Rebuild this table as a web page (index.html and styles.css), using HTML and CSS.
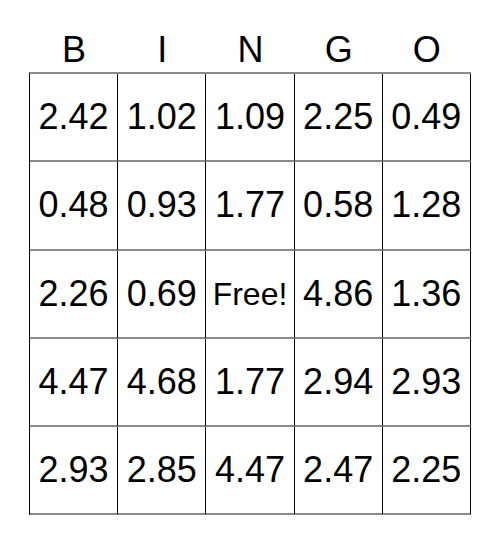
FILE: index.html
```html
<!DOCTYPE html>
<html>
<head>
<meta charset="utf-8">
<link rel="stylesheet" href="styles.css">
</head>
<body>
<div class="card">
  <div class="head">
    <div>B</div><div>I</div><div>N</div><div>G</div><div>O</div>
  </div>
  <div class="grid">
    <div class="cell">2.42</div><div class="cell">1.02</div><div class="cell">1.09</div><div class="cell">2.25</div><div class="cell">0.49</div>
    <div class="cell">0.48</div><div class="cell">0.93</div><div class="cell">1.77</div><div class="cell">0.58</div><div class="cell">1.28</div>
    <div class="cell">2.26</div><div class="cell">0.69</div><div class="cell free">Free!</div><div class="cell">4.86</div><div class="cell">1.36</div>
    <div class="cell">4.47</div><div class="cell">4.68</div><div class="cell">1.77</div><div class="cell">2.94</div><div class="cell">2.93</div>
    <div class="cell">2.93</div><div class="cell">2.85</div><div class="cell">4.47</div><div class="cell">2.47</div><div class="cell">2.25</div>
  </div>
</div>
</body>
</html>
```

FILE: styles.css
```css
html, body {
  margin: 0;
  padding: 0;
  background: #fff;
}
body {
  font-family: "Liberation Sans", Arial, sans-serif;
  color: #000;
}
.card {
  width: 442px;
  margin-left: 29px;
}
.head {
  display: grid;
  grid-template-columns: repeat(5, 88.2px);
  padding-left: 1px;
  padding-top: 32px;
  padding-bottom: 4px;
  font-size: 36px;
  line-height: 36px;
  text-align: center;
}
.grid {
  display: grid;
  grid-template-columns: repeat(5, 88.2px);
  grid-auto-rows: 88.3px;
  border-left: 1px solid #000;
  border-top: 2px solid #8a8a8a;
}
.cell {
  box-sizing: border-box;
  border-right: 1px solid #000;
  border-bottom: 2px solid #8a8a8a;
  display: flex;
  align-items: center;
  justify-content: center;
  font-size: 36px;
  line-height: 36px;
}
.cell.free {
  font-size: 32px;
}
```
